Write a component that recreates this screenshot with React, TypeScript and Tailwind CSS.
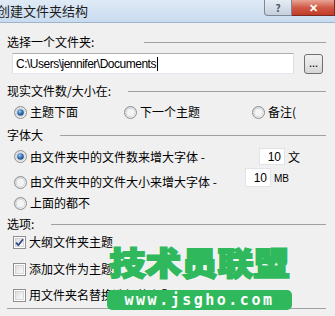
import type { ReactNode } from 'react'

const cjk = '"Noto Sans CJK SC", "Noto Sans", sans-serif'

function Radio({ checked }: { checked?: boolean }) {
  return (
    <svg width="13" height="13" viewBox="0 0 13 13" className="shrink-0">
      <defs>
        <linearGradient id="rb" x1="0" y1="0" x2="1" y2="1">
          <stop offset="0" stopColor="#d2d4d6" />
          <stop offset="1" stopColor="#fbfbfb" />
        </linearGradient>
        <radialGradient id="rd" cx="0.4" cy="0.35" r="0.7">
          <stop offset="0" stopColor="#a9d3f2" />
          <stop offset="0.45" stopColor="#3a7bbf" />
          <stop offset="1" stopColor="#17426e" />
        </radialGradient>
      </defs>
      <circle cx="6.5" cy="6.5" r="6" fill="url(#rb)" stroke="#8d8f91" />
      <circle cx="6.5" cy="6.5" r="4.2" fill="#f4f4f4" stroke="#c9cbcd" strokeWidth="0.6" />
      {checked && <circle cx="6.5" cy="6.5" r="3.3" fill="url(#rd)" />}
    </svg>
  )
}

function Check({ checked }: { checked?: boolean }) {
  return (
    <svg width="13" height="13" viewBox="0 0 13 13" className="shrink-0">
      <defs>
        <linearGradient id="cb" x1="0" y1="0" x2="1" y2="1">
          <stop offset="0" stopColor="#dcdcdc" />
          <stop offset="1" stopColor="#fdfdfd" />
        </linearGradient>
      </defs>
      <rect x="0.5" y="0.5" width="12" height="12" fill="#fff" stroke="#8e8f8f" />
      <rect x="2.5" y="2.5" width="8" height="8" fill="url(#cb)" stroke="#c5c7c9" strokeWidth="0.7" />
      {checked && (
        <path d="M3 6.6 L5.3 9.2 L10 3.3" fill="none" stroke="#2e4a8a" strokeWidth="1.8" strokeLinejoin="round" />
      )}
    </svg>
  )
}

function GroupHead({ label, gap }: { label: string; gap: string }) {
  return (
    <div className="flex h-[16px] items-center">
      <span className="whitespace-nowrap">{label}</span>
      <div className={`h-px flex-1 bg-[#a0a0a0] ${gap}`} />
    </div>
  )
}

function Option({ children, checked, box }: { children: ReactNode; checked?: boolean; box?: boolean }) {
  return (
    <div className="flex items-center">
      {box ? <Check checked={checked} /> : <Radio checked={checked} />}
      <span className="ml-[3px] whitespace-nowrap">{children}</span>
    </div>
  )
}

export default function App() {
  return (
    <div className="relative h-[316px] w-[335px] overflow-hidden bg-[#f0f0f0] text-[12px] leading-[16px] text-black" style={{ fontFamily: cjk }}>
      {/* Title bar */}
      <div className="flex h-[23px] items-start justify-between border-b border-[#9fb3c9] bg-gradient-to-b from-[#dfeaf6] to-[#c9dbef]">
        <span className="-ml-[3px] mt-[3px] text-[13px] leading-[16px] text-[#1b1b1b]">创建文件夹结构</span>
        <div className="flex">
          <div className="flex h-[16px] w-[28px] items-center justify-center rounded-bl-[4px] border border-t-0 border-[#7d8795] bg-gradient-to-b from-[#e6ecf3] to-[#c5d0dd] text-[10px] font-bold leading-none text-[#4a5563]">
            ?
          </div>
          <div className="flex h-[16px] w-[43px] items-center justify-center border border-t-0 border-l-0 border-[#7a2a22] bg-gradient-to-b from-[#e8a496] via-[#cf5a46] to-[#c23b26] text-[11px] font-bold leading-none text-white">
            ✕
          </div>
        </div>
      </div>

      {/* Body */}
      <div className="flex flex-col pl-[7px] pr-[9px]">
        <div className="mt-[11px]">
          <GroupHead label="选择一个文件夹:" gap="ml-[50px]" />
        </div>

        <div className="mt-[3px] flex items-start">
          <div className="ml-[5px] flex h-[21px] w-[282px] items-center border border-[#abadb3] border-l-[#dbdfe6] border-r-[#dbdfe6] border-b-[#e3e9ef] bg-white pl-[3px] text-[12px]" style={{ fontFamily: '"Liberation Sans", sans-serif' }}>
            <span className="tracking-[-0.5px]">C:\Users\jennifer\Documents</span>
            <span className="ml-px h-[14px] w-px bg-black" />
          </div>
          <div className="ml-[10px] mt-px flex h-[20px] w-[19px] items-center justify-center rounded-[3px] border border-[#707070] bg-gradient-to-b from-[#f2f2f2] to-[#d6d6d6] pb-[3px] text-[11px] leading-none">
            ...
          </div>
        </div>

        <div className="mt-[9px]">
          <GroupHead label="现实文件数/大小在:" gap="ml-[17px]" />
        </div>

        <div className="mt-[5px] flex h-[16px] items-center pl-[7px]">
          <div className="w-[110px]">
            <Option checked>主题下面</Option>
          </div>
          <div className="w-[128px]">
            <Option>下一个主题</Option>
          </div>
          <Option>备注(</Option>
        </div>

        <div className="mt-[7px]">
          <GroupHead label="字体大" gap="ml-[17px]" />
        </div>

        <div className="mt-[5px] flex h-[17px] items-center pl-[7px]">
          <div className="w-[238px]">
            <Option checked>由文件夹中的文件数来增大字体 -</Option>
          </div>
          <div className="ml-[7px] flex h-[17px] w-[26px] items-center justify-end border border-[#e2e3e5] bg-white pr-[3px]" style={{ fontFamily: '"Liberation Sans", sans-serif' }}>
            10
          </div>
          <span className="ml-[3px]">文</span>
        </div>

        <div className="mt-[3px] flex h-[19px] items-start pl-[7px]">
          <div className="mt-[6px] w-[231px]">
            <Option>由文件夹中的文件大小来增大字体 -</Option>
          </div>
          <div className="flex h-[19px] w-[26px] items-center justify-end border border-[#e2e3e5] bg-white pr-[3px]" style={{ fontFamily: '"Liberation Sans", sans-serif' }}>
            10
          </div>
          <span className="ml-[3px] mt-[5px] text-[10px] leading-[12px]" style={{ fontFamily: '"Liberation Sans", sans-serif' }}>
            MB
          </span>
        </div>

        <div className="mt-[8px] flex h-[16px] items-center pl-[7px]">
          <Option>上面的都不</Option>
        </div>

        <div className="mt-[5px]">
          <GroupHead label="选项:" gap="ml-[17px]" />
        </div>

        <div className="mt-[2px] flex h-[16px] items-center pl-[6px]">
          <Option box checked>大纲文件夹主题</Option>
        </div>
        <div className="mt-[11px] flex h-[16px] items-center pl-[6px]">
          <Option box>添加文件为主题</Option>
        </div>
        <div className="mt-[10px] flex h-[16px] items-center pl-[6px]">
          <Option box>用文件夹名替换选择的主题</Option>
        </div>

        <div className="mt-[5px] h-px bg-[#a0a0a0]" />
      </div>

      {/* Watermark */}
      <div className="absolute left-[106px] top-[245px] flex w-[187px] flex-col items-center">
        <div
          className="h-[36px] origin-top scale-y-[0.88] whitespace-nowrap text-[36px] font-black leading-[36px] tracking-[0px] text-[#2fb95c]"
          style={{ fontFamily: cjk, WebkitTextStroke: '2px #2fb95c', textShadow: '0 0 3px #fff, 0 0 3px #fff' }}
        >
          技术员联盟
        </div>
        <div className="mt-[9px] flex h-[20px] w-[185px] items-center justify-center rounded-[5px] bg-[#2fb95c] text-[15px] font-bold leading-none tracking-[2.5px] text-white" style={{ fontFamily: '"DejaVu Sans Mono", monospace' }}>
          www.jsgho.com
        </div>
      </div>
    </div>
  )
}
